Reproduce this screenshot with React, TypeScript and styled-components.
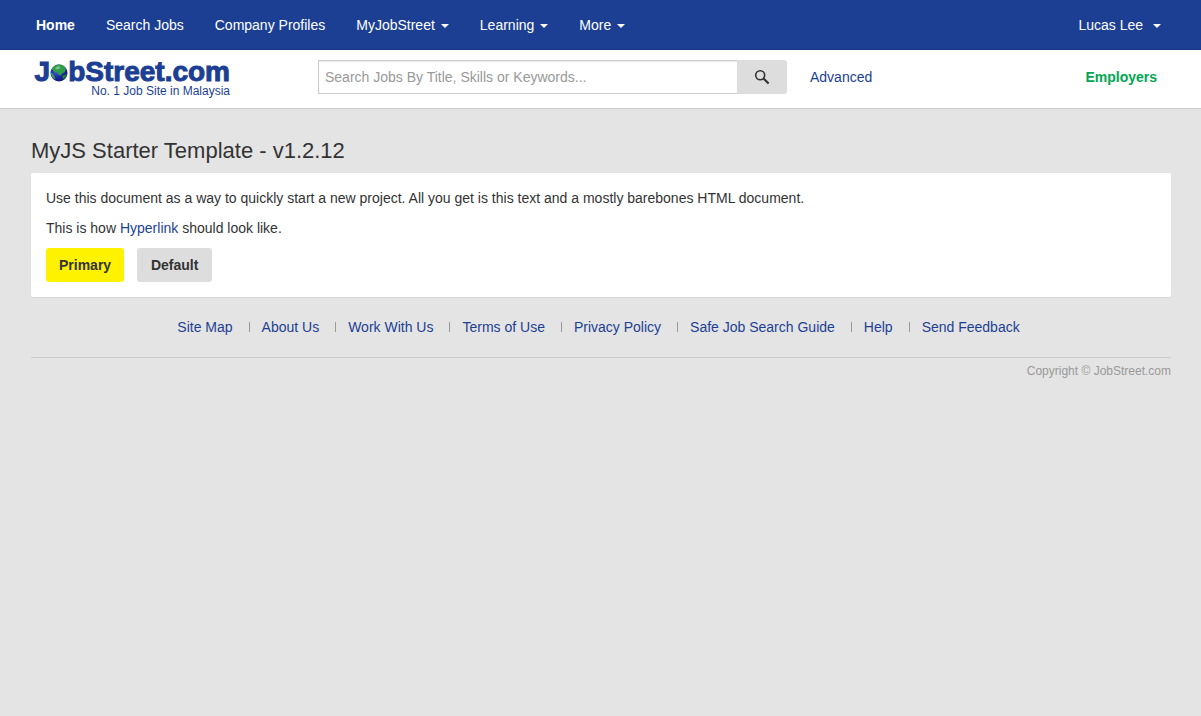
import React from "react";
import styled, { createGlobalStyle, css } from "styled-components";

const blue = "#1c3f94";

const GlobalStyle = createGlobalStyle`
  *, *::before, *::after { box-sizing: border-box; }
  body {
    margin: 0;
    background: #e4e4e4;
    color: #333;
    font: 14px/20px "Liberation Sans", Arial, sans-serif;
  }
`;

const Container = styled.div`
  margin: 0 30px 0 31px;
`;

const NavBar = styled.nav`
  background: ${blue};
  border-bottom: 1px solid #1a3a88;
`;

const NavInner = styled(Container)`
  display: flex;
  align-items: center;
  min-height: 49px;
  padding: 0 10px 0 5px;
`;

const NavList = styled.ul`
  display: flex;
  gap: 31px;
  flex: 1;
  margin: 0;
  padding: 0;
  list-style: none;
`;

const navText = css`
  color: #fff;
  font-size: 14px;
  line-height: 20px;
  white-space: nowrap;
`;

const NavLink = styled.a<{ $active?: boolean }>`
  ${navText}
  display: block;
  font-weight: ${(p) => (p.$active ? 700 : 400)};
  text-decoration: none;
`;

const NavMenu = styled.button<{ $gap?: number }>`
  ${navText}
  display: flex;
  align-items: center;
  gap: ${(p) => p.$gap ?? 6}px;
  padding: 0;
  border: 0;
  background: none;
  font-family: inherit;
  cursor: pointer;
`;

const Caret = styled.span`
  margin-top: 2px;
  border-top: 4px solid currentColor;
  border-left: 4px solid transparent;
  border-right: 4px solid transparent;
`;

const Header = styled.header`
  background: #fff;
  border-bottom: 1px solid #ccc;
`;

const HeaderInner = styled(Container)`
  display: flex;
  align-items: center;
  min-height: 58px;
  padding: 0 14px 4px 1px;
`;

const Logo = styled.a`
  display: flex;
  flex-direction: column;
  align-items: flex-end;
  width: 198px;
  margin-right: 88px;
  padding-top: 4px;
  color: ${blue};
  text-decoration: none;
  white-space: nowrap;
`;

const Wordmark = styled.span`
  position: relative;
  display: flex;
  align-items: center;
  font-size: 28px;
  font-weight: 700;
  line-height: 24px;
  -webkit-text-stroke: 1px ${blue};
  /* the serif on the J */
  &::before {
    content: "";
    position: absolute;
    top: 2px;
    left: 5px;
    width: 6px;
    height: 4px;
    background: ${blue};
  }
`;

const Globe = styled.svg`
  width: 18px;
  height: 18px;
  margin-top: 2px;
`;

const Tagline = styled.span`
  font-size: 12px;
  line-height: 14px;
`;

const SearchForm = styled.form`
  display: flex;
  flex: 0 1 469px;
  margin-right: 23px;
`;

const SearchInput = styled.input`
  flex: 1;
  min-width: 0;
  height: 34px;
  padding: 0 6px;
  border: 1px solid #ccc;
  border-right: 0;
  border-radius: 0;
  background: #fff;
  box-shadow: inset 0 1px 1px rgba(0, 0, 0, 0.08);
  color: #333;
  font: inherit;
  &::placeholder { color: #999; opacity: 1; }
`;

const SearchButton = styled.button`
  display: flex;
  align-items: center;
  justify-content: center;
  width: 50px;
  height: 34px;
  padding: 0;
  border: 0;
  border-radius: 0 3px 3px 0;
  background: #ddd;
  color: #333;
  cursor: pointer;
`;

const TextLink = styled.a`
  color: ${blue};
  text-decoration: none;
`;

const EmployersLink = styled(TextLink)`
  margin-left: auto;
  color: #00a651;
  font-weight: 700;
`;

const Title = styled.h1`
  margin: 28px 0 9px;
  font-size: 22px;
  font-weight: 400;
  line-height: 27px;
`;

const Panel = styled.section`
  padding: 15px;
  border-radius: 2px;
  background: #fff;
  box-shadow: 0 1px 1px rgba(0, 0, 0, 0.06);
  p { margin: 0 0 10px; }
`;

const Buttons = styled.div`
  display: flex;
  gap: 13px;
`;

const Button = styled.button<{ $primary?: boolean }>`
  min-width: 75px;
  height: 34px;
  padding: 0 13px;
  border: 0;
  border-radius: 3px;
  background: ${(p) => (p.$primary ? "#fff200" : "#ddd")};
  color: #333;
  font: inherit;
  font-weight: 700;
  cursor: pointer;
`;

const FooterLinks = styled.ul`
  display: flex;
  flex-wrap: wrap;
  justify-content: center;
  margin: 20px 0;
  padding: 0 5px 0 0;
  list-style: none;
`;

const FooterItem = styled.li`
  display: flex;
  align-items: center;
  & + &::before {
    content: "";
    width: 1px;
    height: 10px;
    margin: 0 12px 0 16px;
    background: #999;
  }
`;

const Copyright = styled.p`
  margin: 0;
  padding-top: 3px;
  border-top: 1px solid #ccc;
  color: #999;
  font-size: 12px;
  text-align: right;
`;

const menus = ["MyJobStreet", "Learning", "More"];
const footerLinks = [
  "Site Map",
  "About Us",
  "Work With Us",
  "Terms of Use",
  "Privacy Policy",
  "Safe Job Search Guide",
  "Help",
  "Send Feedback",
];

export default function App() {
  return (
    <>
      <GlobalStyle />
      <NavBar aria-label="Main">
        <NavInner>
          <NavList>
            <li><NavLink href="#" $active aria-current="page">Home</NavLink></li>
            <li><NavLink href="#">Search Jobs</NavLink></li>
            <li><NavLink href="#">Company Profiles</NavLink></li>
            {menus.map((m) => (
              <li key={m}>
                <NavMenu type="button" aria-haspopup="true">{m}<Caret /></NavMenu>
              </li>
            ))}
          </NavList>
          <NavMenu type="button" aria-haspopup="true" $gap={10}>Lucas Lee<Caret /></NavMenu>
        </NavInner>
      </NavBar>
      <Header>
        <HeaderInner>
          <Logo href="#">
            <Wordmark>
              J
              <Globe viewBox="0 0 18 18" aria-hidden="true">
                <defs>
                  <radialGradient id="sea" cx="0.4" cy="0.35" r="0.7">
                    <stop offset="0" stopColor="#5a7bd0" />
                    <stop offset="0.5" stopColor="#1f2fa6" />
                    <stop offset="1" stopColor="#0d0f78" />
                  </radialGradient>
                </defs>
                <circle cx="9" cy="9" r="8.5" fill="url(#sea)" />
                <path d="M2 5C3.500 2.200 6 .7 9 .6c2.600 0 4.800 1.200 6.200 2.900l.6 2.500-1.500 2.500-2.300 1-1.500 2-2-1-1-2.500-2.500.5L3.500 7z" fill="#2f9e46" />
                <path d="M5 4.500 7.500 2.300l3 .4-1 2-2.500.8z" fill="#7cc58a" />
                <path d="M.8 8.500l2 1 1.700 2.500 1 3.500C2.800 14.500.9 12 .8 8.500z" fill="#3c9a62" />
                <path d="M12 12l3-1.500 2 .3c-.6 2-1.800 3.500-3.500 4.700z" fill="#187a3c" />
              </Globe>
              bStreet.com
            </Wordmark>
            <Tagline>No. 1 Job Site in Malaysia</Tagline>
          </Logo>
          <SearchForm role="search" onSubmit={(e) => e.preventDefault()}>
            <SearchInput
              type="text"
              aria-label="Search jobs"
              placeholder="Search Jobs By Title, Skills or Keywords..."
            />
            <SearchButton type="submit" aria-label="Search">
              <svg width="16" height="16" viewBox="0 0 16 16" fill="none" stroke="currentColor">
                <circle cx="6.200" cy="6.200" r="4.500" strokeWidth="1.600" />
                <path d="M9.500 9.500 14.600 14.600" strokeWidth="2.100" />
              </svg>
            </SearchButton>
          </SearchForm>
          <TextLink href="#">Advanced</TextLink>
          <EmployersLink href="#">Employers</EmployersLink>
        </HeaderInner>
      </Header>
      <Container as="main">
        <Title>MyJS Starter Template - v1.2.12</Title>
        <Panel>
          <p>
            Use this document as a way to quickly start a new project. All you get is this text and a
            mostly barebones HTML document.
          </p>
          <p>This is how <TextLink href="#">Hyperlink</TextLink> should look like.</p>
          <Buttons>
            <Button type="button" $primary>Primary</Button>
            <Button type="button">Default</Button>
          </Buttons>
        </Panel>
      </Container>
      <Container as="footer">
        <FooterLinks>
          {footerLinks.map((label) => (
            <FooterItem key={label}><TextLink href="#">{label}</TextLink></FooterItem>
          ))}
        </FooterLinks>
        <Copyright>Copyright © JobStreet.com</Copyright>
      </Container>
    </>
  );
}
